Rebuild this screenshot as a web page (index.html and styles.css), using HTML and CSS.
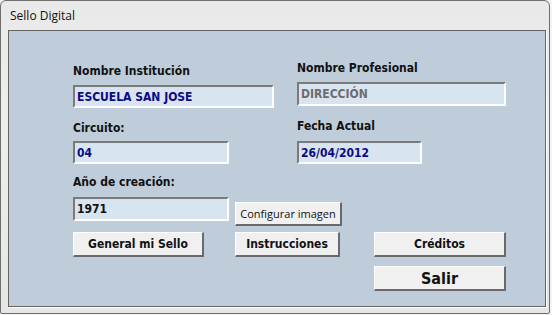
FILE: index.html
```html
<!DOCTYPE html>
<html lang="es">
<head>
    <meta charset="UTF-8">
    <title>Sello Digital</title>
    <link rel="stylesheet" href="styles.css">
</head>
<body>
    <div class="window">
        <div class="title-bar">Sello Digital</div>

        <div class="panel">
            <!-- Datos de la institucion -->
            <div class="columns">
                <div class="col-left">
                    <div class="label label-first">Nombre Institución</div>
                    <div class="field field-wide">ESCUELA SAN JOSE</div>
                    <div class="label label-second">Circuito:</div>
                    <div class="field field-short">04</div>
                </div>
                <div class="col-right">
                    <div class="label">Nombre Profesional</div>
                    <div class="field field-long disabled">DIRECCIÓN</div>
                    <div class="label label-date">Fecha Actual</div>
                    <div class="field field-date">26/04/2012</div>
                </div>
            </div>

            <div class="label label-year">Año de creación:</div>
            <div class="year-row">
                <div class="field field-short field-year plain">1971</div>
                <button class="btn btn-small">Configurar imagen</button>
            </div>

            <!-- Acciones -->
            <div class="actions">
                <button class="btn btn-general">General mi Sello</button>
                <button class="btn btn-instr">Instrucciones</button>
                <button class="btn btn-credits">Créditos</button>
            </div>
            <div class="exit-row">
                <button class="btn btn-exit">Salir</button>
            </div>
        </div>
    </div>
</body>
</html>
```

FILE: styles.css
```css
body {
    margin: 0;
    background-color: #f4f4f4;
    font-family: "DejaVu Sans Condensed", "DejaVu Sans", sans-serif;
}

.window {
    box-sizing: border-box;
    width: 550px;
    height: 314px;
    background: linear-gradient(to bottom, #e9e9e9, #eeeeee 40%, #e6e6e6);
    border: 1px solid #6e6e6e;
    border-radius: 6px 6px 2px 2px;
    padding: 0 3px 0 7px;
}

.title-bar {
    height: 29px;
    line-height: 30px;
    padding-left: 2px;
    font-family: "Open Sans", "Noto Sans", sans-serif;
    font-size: 12px;
    color: #111;
}

.panel {
    width: 538px;
    height: 277px;
    box-sizing: border-box;
    background-color: #bfcddb;
    border: 1px solid #646464;
    box-shadow: 1px 1px 0 #ffffff;
    padding: 30px 0 0 64px;
}

.label {
    font-size: 12px;
    font-weight: bold;
    line-height: 14px;
    color: #111;
}

.columns {
    display: flex;
    align-items: flex-start;
}

.col-left {
    width: 224px;
    padding-top: 3px;
}

.col-right {
    display: flex;
    flex-direction: column;
    align-items: flex-start;
}

.field {
    box-sizing: border-box;
    height: 23px;
    background-color: #d8e4f0;
    border-top: 2px solid #7a7a7a;
    border-left: 2px solid #7a7a7a;
    border-right: 2px solid #ffffff;
    border-bottom: 2px solid #ffffff;
    padding: 3px 0 0 2px;
    font-size: 12px;
    font-weight: bold;
    line-height: 14px;
    color: #0b0b84;
}

.field.disabled {
    color: #6d6d6d;
}

.field.plain {
    color: #111;
}

.field-wide {
    width: 201px;
    margin-top: 7px;
}

.field-short {
    width: 156px;
}

.field-year {
    height: 24px;
    margin-top: 1px;
}

.field-long {
    width: 209px;
    height: 24px;
    margin-top: 7px;
}

.field-date {
    width: 125px;
    margin-top: 8px;
}

.label-second {
    margin: 13px 0 6px;
}

.label-date {
    margin-top: 13px;
}

.label-year {
    margin: 11px 0 7px;
}

.year-row {
    display: flex;
    align-items: flex-start;
    gap: 6px;
}

.btn {
    box-sizing: border-box;
    height: 25px;
    padding: 0;
    background-color: #f0f0f0;
    border-top: 1px solid #ffffff;
    border-left: 1px solid #ffffff;
    border-right: 2px solid #6a6a6a;
    border-bottom: 2px solid #6a6a6a;
    font-family: "DejaVu Sans Condensed", "DejaVu Sans", sans-serif;
    font-size: 12px;
    font-weight: bold;
    color: #111;
}

.btn-small {
    width: 107px;
    height: 24px;
    margin-top: 6px;
    font-family: "Open Sans", "Noto Sans", sans-serif;
    font-size: 11px;
    font-weight: normal;
}

.actions {
    display: flex;
    margin-top: 6px;
}

.btn-general {
    width: 131px;
}

.btn-instr {
    width: 105px;
    margin-left: 31px;
}

.btn-credits {
    width: 132px;
    margin-left: 34px;
}

.exit-row {
    margin: 9px 0 0 301px;
}

.btn-exit {
    width: 132px;
    font-size: 16px;
}
```
